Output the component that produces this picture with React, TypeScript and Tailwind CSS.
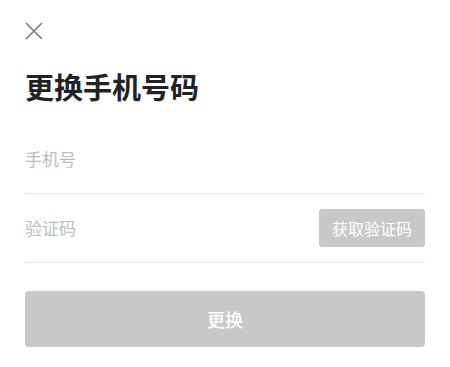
import React from "react";

export default function App() {
  return (
    <div
      className="w-[450px] h-[367px] bg-white px-[25px] pt-[22px]"
      style={{ fontFamily: '"Noto Sans CJK SC", "Noto Sans", sans-serif' }}
    >
      <button className="block w-[18px] h-[18px] p-0">
        <svg width="18" height="18" viewBox="0 0 18 18" fill="none">
          <path d="M1 1L17 17M17 1L1 17" stroke="#7a7a7a" strokeWidth="1.6" />
        </svg>
      </button>
      <h1 className="mt-[28px] text-[29px] leading-[36px] font-bold text-[#222]">更换手机号码</h1>
      <div className="mt-[21px] h-[69px] flex items-center border-b border-[#e8e8e8]">
        <span className="text-[17px] text-[#bdbdbd]">手机号</span>
      </div>
      <div className="h-[69px] flex items-center justify-between border-b border-[#e8e8e8]">
        <span className="text-[17px] text-[#bdbdbd]">验证码</span>
        <div className="w-[106px] h-[38px] rounded-[3px] bg-[#c8c8c8] flex items-center justify-center text-[16px] text-white">
          获取验证码
        </div>
      </div>
      <div className="mt-[28px] h-[56px] rounded-[4px] bg-[#c8c8c8] flex items-center justify-center text-[18px] text-white font-medium">
        更换
      </div>
    </div>
  );
}
